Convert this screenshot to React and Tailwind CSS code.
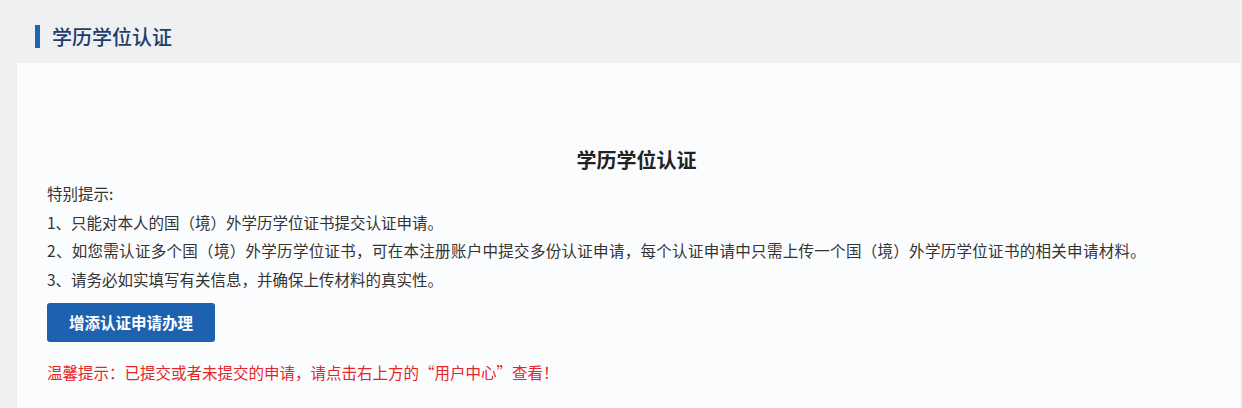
export default function App() {
  const font = { fontFamily: '"Noto Sans CJK SC", "Noto Sans", sans-serif' };
  return (
    <div className="w-[1242px] h-[408px] bg-[#eef0f2] flex flex-col overflow-hidden" style={font}>
      <div className="h-[63px] shrink-0 flex items-start pt-[24px] pl-[35px]">
        <div className="w-[5px] h-[23px] bg-[#2263ad] mt-[1px]" />
        <div className="ml-[12px] text-[20px] leading-[25px] font-medium text-[#1f3d6b]">学历学位认证</div>
      </div>
      <div className="flex-1 ml-[17px] mr-[2px] bg-[#fbfcfe] pl-[30px] pr-[20px] pt-[83px]">
        <div className="flex justify-center pl-[6px]">
          <div className="text-[20px] leading-[28px] font-bold text-[#222]">学历学位认证</div>
        </div>
        <div className="mt-[5px] text-[15.5px] leading-[28.5px] text-[#333]">
          <div>特别提示:</div>
          <div>1、只能对本人的国（境）外学历学位证书提交认证申请。</div>
          <div className="tracking-[0.3px]">2、如您需认证多个国（境）外学历学位证书，可在本注册账户中提交多份认证申请，每个认证申请中只需上传一个国（境）外学历学位证书的相关申请材料。</div>
          <div>3、请务必如实填写有关信息，并确保上传材料的真实性。</div>
        </div>
        <button className="mt-[10px] w-[168px] h-[39px] rounded-[3px] bg-[#1d62b0] text-white text-[15.5px] font-bold flex items-center justify-center">
          增添认证申请办理
        </button>
        <div className="mt-[16px] text-[15.5px] leading-[28px] text-[#e52626]">
          温馨提示：已提交或者未提交的申请，请点击右上方的“用户中心”查看！
        </div>
      </div>
    </div>
  );
}
